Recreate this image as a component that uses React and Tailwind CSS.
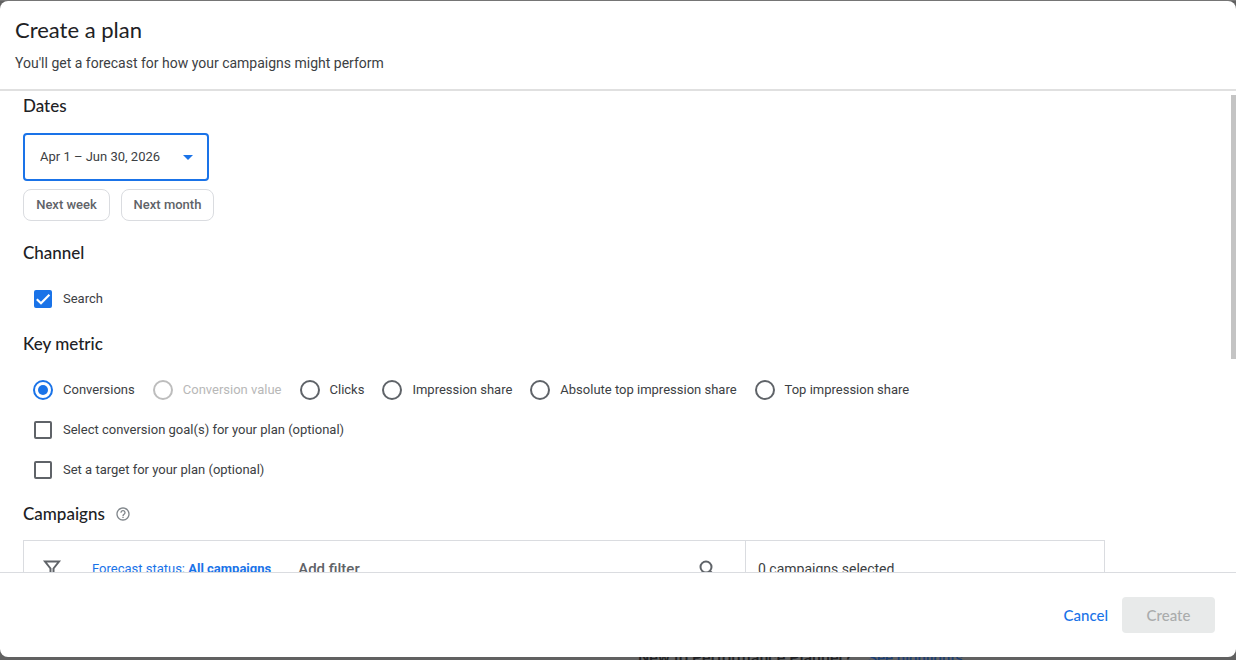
import { useState } from 'react'

const metrics = [
  { id: 'conversions', label: 'Conversions' },
  { id: 'value', label: 'Conversion value', disabled: true },
  { id: 'clicks', label: 'Clicks' },
  { id: 'impression', label: 'Impression share' },
  { id: 'absolute-top', label: 'Absolute top impression share' },
  { id: 'top', label: 'Top impression share' },
]

const ranges = ['Apr 1 – Jun 30, 2026', 'Jul 1 – Sep 30, 2026']

function SectionTitle({ children }) {
  return <h2 className="font-['Lato',sans-serif] text-[17px] leading-6 font-medium text-[#202124]">{children}</h2>
}

function Checkbox({ label, checked, onChange }) {
  return (
    <label className="flex h-10 w-fit items-center gap-[11px] pl-[11px] text-[13px]">
      <span className="relative flex size-[18px]">
        <input
          type="checkbox"
          checked={checked}
          onChange={onChange}
          className="size-[18px] appearance-none rounded-xs border-2 border-[#5f6368] checked:border-[#1a73e8] checked:bg-[#1a73e8]"
        />
        {checked && (
          <svg viewBox="0 0 18 18" className="pointer-events-none absolute inset-0 size-[18px]" fill="none" stroke="#fff" strokeWidth="2.2">
            <path d="M2.8 9.2l4.2 4L15.4 4.8" />
          </svg>
        )}
      </span>
      {label}
    </label>
  )
}

function Radio({ metric, checked, onChange }) {
  return (
    <label className={`flex h-10 items-center gap-[10px] text-[13px] ${metric.disabled ? 'text-[#b8b8b8]' : ''}`}>
      <span className="relative flex size-5">
        <input
          type="radio"
          name="metric"
          value={metric.id}
          checked={checked}
          disabled={metric.disabled}
          onChange={onChange}
          className="size-5 appearance-none rounded-full border-2 border-[#5f6368] checked:border-[#1a73e8] disabled:border-[#bdbdbd]"
        />
        {checked && <span className="pointer-events-none absolute inset-[5px] rounded-full bg-[#1a73e8]" />}
      </span>
      {metric.label}
    </label>
  )
}

export default function App() {
  const [range, setRange] = useState(ranges[0])
  const [search, setSearch] = useState(true)
  const [metric, setMetric] = useState('conversions')
  const [goals, setGoals] = useState(false)
  const [target, setTarget] = useState(false)

  return (
    <div className="relative flex h-screen flex-col overflow-hidden bg-[#616161] pt-px pb-[3px] font-['Roboto',sans-serif] text-[#3c4043]">
      {/* page behind the dialog */}
      <div className="absolute inset-x-0 top-0 h-px bg-[#757575]" />
      <div className="absolute top-[648px] left-[638px] flex gap-4 leading-5 font-medium whitespace-nowrap">
        <span className="text-base leading-5 text-[#202124]">New to Performance Planner?</span>
        <a href="#highlights" className="text-[15px] leading-5 text-[#1c3f75]">See highlights</a>
      </div>

      <div role="dialog" aria-labelledby="title" className="relative flex min-h-0 flex-1 flex-col overflow-hidden rounded-lg bg-white">
        <header className="border-b-2 border-[#e0e0e0] px-[15px] pt-[15px] pb-4">
          <h1 id="title" className="font-['Lato',sans-serif] text-[22px] leading-7 text-[#202124]">Create a plan</h1>
          <p className="mt-[9px] text-sm leading-5">You'll get a forecast for how your campaigns might perform</p>
        </header>

        <main className="relative min-h-0 flex-1 overflow-hidden pl-[23px]">
          <div className="absolute top-1 right-0 h-[264px] w-[5px] bg-[#c4c4c4]" />

          <section className="pt-[3px]">
            <SectionTitle>Dates</SectionTitle>
            <div className="relative mt-[15px] w-[186px]">
              <select
                aria-label="Date range"
                value={range}
                onChange={(e) => setRange(e.target.value)}
                className="h-12 w-full appearance-none rounded-sm border-2 border-[#1a73e8] bg-white pl-[15px] text-[13px] text-[#3c4043]"
              >
                {ranges.map((r) => (
                  <option key={r}>{r}</option>
                ))}
              </select>
              <svg viewBox="0 0 10 5" className="pointer-events-none absolute top-[22px] right-4 h-[5px] w-[10px]" fill="#1a73e8">
                <path d="M0 0h10L5 5z" />
              </svg>
            </div>
            <div className="mt-2 flex gap-[11px] text-[13px] font-medium text-[#5f6368]">
              <button className="h-8 w-[87px] rounded-lg border border-[#dadce0]">Next week</button>
              <button className="h-8 w-[93px] rounded-lg border border-[#dadce0]">Next month</button>
            </div>
          </section>

          <section className="pt-5">
            <SectionTitle>Channel</SectionTitle>
            <div className="mt-[14px]">
              <Checkbox label="Search" checked={search} onChange={() => setSearch(!search)} />
            </div>
          </section>

          <section className="pt-[13px]">
            <SectionTitle>Key metric</SectionTitle>
            <div className="mt-[14px] flex gap-[18px] pl-[10px]">
              {metrics.map((m) => (
                <Radio key={m.id} metric={m} checked={metric === m.id} onChange={() => setMetric(m.id)} />
              ))}
            </div>
            <Checkbox label="Select conversion goal(s) for your plan (optional)" checked={goals} onChange={() => setGoals(!goals)} />
            <Checkbox label="Set a target for your plan (optional)" checked={target} onChange={() => setTarget(!target)} />
          </section>

          <section className="pt-3">
            <div className="flex items-center gap-[10px]">
              <SectionTitle>Campaigns</SectionTitle>
              <button aria-label="Help">
                <svg viewBox="0 0 24 24" className="size-4" fill="#80868b">
                  <path d="M11 18h2v-2h-2v2zm1-16C6.48 2 2 6.48 2 12s4.48 10 10 10 10-4.48 10-10S17.52 2 12 2zm0 18c-4.41 0-8-3.59-8-8s3.59-8 8-8 8 3.59 8 8-3.59 8-8 8zm0-14c-2.21 0-4 1.79-4 4h2c0-1.1.9-2 2-2s2 .9 2 2c0 2-3 1.75-3 5h2c0-2.25 3-2.5 3-5 0-2.21-1.79-4-4-4z" />
                </svg>
              </button>
            </div>
            <div className="mt-[14px] mr-[131px] flex h-64 border border-[#dadce0]">
              <div className="flex h-14 flex-1 items-center pr-7 pl-[18px]">
                <svg viewBox="0 0 20 20" className="size-5" fill="none" stroke="#5f6368" strokeWidth="2">
                  <path d="M3 2.5h14L11.5 9.5v8h-3v-8z" />
                </svg>
                <button className="ml-[30px] text-[13px] text-[#1a73e8]">
                  Forecast status: <b className="font-bold">All campaigns</b>
                </button>
                <button className="ml-[27px] text-[15px] font-medium text-[#5f6368]">Add filter</button>
                <button aria-label="Search campaigns" className="ml-auto">
                  <svg viewBox="0 0 18 18" className="size-[18px]" fill="none" stroke="#5f6368" strokeWidth="2">
                    <circle cx="7" cy="7" r="5.5" />
                    <path d="M11 11l6 6" />
                  </svg>
                </button>
              </div>
              <div className="flex w-[359px] border-l border-[#dadce0] pl-3">
                <p className="flex h-14 items-center text-sm">0 campaigns selected</p>
              </div>
            </div>
          </section>
        </main>

        <footer className="flex h-[85px] shrink-0 items-center justify-end border-t border-[#dadce0] pr-[21px] font-['Lato',sans-serif] text-[15px] font-medium">
          <button className="h-9 px-[14px] text-[#1a73e8]">Cancel</button>
          <button disabled className="h-9 w-[93px] rounded-sm bg-[#e8eaea] text-[#aaacac]">Create</button>
        </footer>
      </div>
    </div>
  )
}
